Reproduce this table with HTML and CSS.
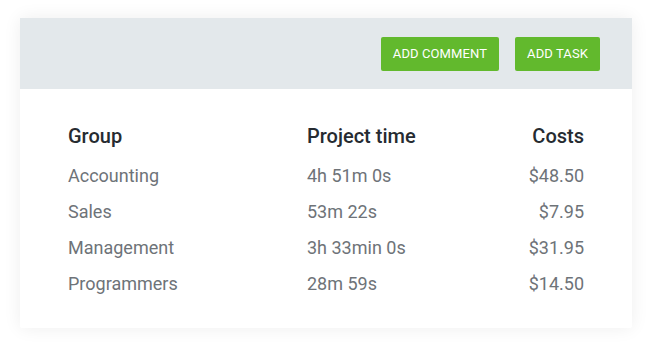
FILE: index.html
```html
<!DOCTYPE html>
<html>
<head>
<meta charset="utf-8">
<link rel="stylesheet" href="styles.css">
</head>
<body>
<div class="card">
  <div class="toolbar">
    <button class="btn">ADD COMMENT</button>
    <button class="btn">ADD TASK</button>
  </div>
  <div class="content">
    <div class="table">
      <div class="th">Group</div>
      <div class="th">Project time</div>
      <div class="th right">Costs</div>
      <div class="td">Accounting</div>
      <div class="td">4h 51m 0s</div>
      <div class="td right">$48.50</div>
      <div class="td">Sales</div>
      <div class="td">53m 22s</div>
      <div class="td right">$7.95</div>
      <div class="td">Management</div>
      <div class="td">3h 33min 0s</div>
      <div class="td right">$31.95</div>
      <div class="td">Programmers</div>
      <div class="td">28m 59s</div>
      <div class="td right">$14.50</div>
    </div>
  </div>
</div>
</body>
</html>
```

FILE: styles.css
```css
html, body {
  margin: 0;
  padding: 0;
  background: #ffffff;
}
body {
  padding: 18px 20px;
  font-family: Roboto, "Liberation Sans", sans-serif;
}
.card {
  width: 612px;
  background: #ffffff;
  box-shadow: 0 0 18px rgba(0, 0, 0, 0.07);
  border-radius: 2px;
}
.toolbar {
  height: 71px;
  background: #e3e8eb;
  display: flex;
  justify-content: flex-end;
  align-items: flex-start;
  gap: 16px;
  padding: 19px 32px 0 0;
  box-sizing: border-box;
}
.btn {
  height: 34px;
  padding: 0 12px;
  border: 0;
  border-radius: 2px;
  background: #62b92d;
  color: #ffffff;
  font-family: Roboto, "Liberation Sans", sans-serif;
  font-size: 13px;
  font-weight: 400;
  letter-spacing: 0.1px;
  line-height: 34px;
  cursor: pointer;
}
.content {
  padding: 29px 48px 26px 48px;
}
.table {
  display: grid;
  grid-template-columns: 239px 1fr auto;
}
.th {
  font-size: 20px;
  font-weight: 500;
  color: #262b31;
  line-height: 36px;
  margin-bottom: 4px;
}
.td {
  font-size: 18px;
  font-weight: 400;
  color: #6e7378;
  line-height: 36px;
}
.right {
  text-align: right;
}
```
